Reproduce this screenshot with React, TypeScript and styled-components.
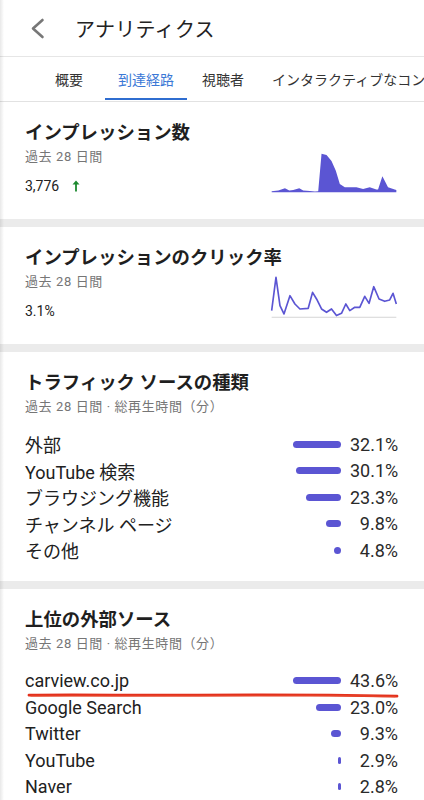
import React from 'react';
import styled, {createGlobalStyle} from 'styled-components';

const GlobalStyle = createGlobalStyle`
  html, body {
    margin: 0;
    padding: 0;
    background: #fff;
    overflow: hidden;
  }
  body {
    font-family: Roboto, "Noto Sans CJK JP", "Noto Sans", sans-serif;
    color: #212121;
  }
`;

const Page = styled.div`
  position: relative;
  width: 424px;
  background: #fff;

  &::after {
    content: '';
    position: absolute;
    left: 0;
    top: 0;
    bottom: 0;
    width: 4px;
    background: linear-gradient(to right, rgba(0, 0, 0, 0.09), rgba(0, 0, 0, 0));
    pointer-events: none;
  }
`;

const Header = styled.header`
  display: flex;
  align-items: center;
  height: 56px;
  padding-left: 28px;
  border-bottom: 1px solid #e6e6e6;
`;

const BackButton = styled.div`
  display: flex;
  width: 20px;
  height: 24px;
  margin-right: 27px;
`;

const Title = styled.h1`
  margin: 0;
  font-size: 20px;
  font-weight: 400;
  color: #222;
  letter-spacing: 0.3px;
`;

const Tabs = styled.nav`
  display: flex;
  height: 44px;
  padding-left: 33px;
  border-bottom: 1px solid #e2e2e2;
  box-shadow: 0 1px 0 #f2f2f2;
  overflow: hidden;
  white-space: nowrap;
`;

const Tab = styled.div<{ $active?: boolean }>`
  position: relative;
  display: flex;
  align-items: center;
  justify-content: center;
  flex-shrink: 0;
  min-width: 72px;
  box-sizing: border-box;
  padding: 0 13px;
  font-size: 14px;
  color: ${p => (p.$active ? '#3b78d6' : '#333')};

  &::after {
    content: '';
    position: absolute;
    left: 0;
    right: 0;
    bottom: 1px;
    height: 2px;
    background: ${p => (p.$active ? '#2f6dd0' : 'transparent')};
  }
`;

const Band = styled.div`
  height: 8px;
  background: #ebebeb;
`;

const Card = styled.section<{ $bottom?: number }>`
  padding: 18px 26px ${p => p.$bottom ?? 23}px 25px;
  background: #fff;
`;

const CardBody = styled.div`
  display: flex;
  align-items: flex-end;
`;

const CardText = styled.div`
  flex: 1;
  display: flex;
  flex-direction: column;
`;

const CardTitle = styled.h2`
  margin: 0;
  height: 26px;
  line-height: 26px;
  font-size: 18.4px;
  font-weight: 700;
  color: #1f1f1f;
  white-space: nowrap;
`;

const Sub = styled.div`
  margin-top: 2px;
  height: 18px;
  line-height: 18px;
  font-size: 13px;
  letter-spacing: 0.6px;
  color: #767676;
  white-space: nowrap;
`;

const Value = styled.div`
  display: flex;
  align-items: center;
  gap: 13px;
  margin-top: 10px;
  height: 20px;
  font-size: 14px;
  color: #222;
`;

const Chart = styled.svg`
  flex-shrink: 0;
  width: 128px;
  height: 45px;
  margin-bottom: 2px;
`;

const Rows = styled.div`
  margin-top: 15px;
`;

const Row = styled.div`
  position: relative;
  display: flex;
  align-items: center;
  height: 26.5px;
  font-size: 18px;
`;

const Label = styled.span`
  flex: 1;
  color: #212121;
  white-space: nowrap;
`;

const BarSlot = styled.div`
  display: flex;
  justify-content: flex-end;
  width: 48px;
  margin-right: 9px;
`;

const Bar = styled.div`
  height: 7px;
  border-radius: 4px;
  background: #5b55d3;
`;

const Pct = styled.span`
  width: 48px;
  text-align: right;
  color: #2a2a2a;
  white-space: nowrap;
`;

const Scribble = styled.svg`
  position: absolute;
  left: 3px;
  bottom: -5px;
  width: calc(100% - 3px);
  height: 7px;
  overflow: visible;
`;

const impressionPts = [
  [35, 160], [35, 157], [55, 155], [75, 148], [88, 155], [100, 153], [118, 148], [130, 155],
  [150, 156], [165, 158], [175, 157], [185, 44], [200, 48], [215, 66], [228, 95], [240, 135],
  [255, 145], [290, 145], [310, 150], [330, 145], [350, 152], [355, 152], [368, 112],
  [375, 125], [385, 145], [405, 152], [410, 153], [410, 160],
];

const ctrPts = [
  [35, 140], [48, 40], [60, 125], [72, 150], [90, 95], [105, 120], [120, 135], [145, 133],
  [158, 85], [170, 105], [185, 135], [200, 145], [215, 135], [230, 155], [245, 148],
  [258, 120], [270, 140], [285, 130], [300, 130], [315, 97], [328, 118], [342, 68],
  [358, 105], [375, 112], [390, 108], [400, 88], [410, 120],
];

const toPath = (pts: number[][]) => pts.map((p, i) => `${i ? 'L' : 'M'}${p[0]} ${p[1]}`).join(' ');

type Source = { label: string; pct: number };

const trafficTypes: Source[] = [
  {label: '外部', pct: 32.1},
  {label: 'YouTube 検索', pct: 30.1},
  {label: 'ブラウジング機能', pct: 23.3},
  {label: 'チャンネル ページ', pct: 9.8},
  {label: 'その他', pct: 4.8},
];

const externalSources: Source[] = [
  {label: 'carview.co.jp', pct: 43.6},
  {label: 'Google Search', pct: 23.0},
  {label: 'Twitter', pct: 9.3},
  {label: 'YouTube', pct: 2.9},
  {label: 'Naver', pct: 2.8},
];

function SourceList({items, marked}: { items: Source[]; marked?: number }) {
  const max = Math.max(...items.map(i => i.pct));
  return (
    <Rows>
      {items.map((item, i) => (
        <Row key={item.label}>
          <Label>{item.label}</Label>
          <BarSlot>
            <Bar style={{width: Math.max(3, (item.pct / max) * 48)}}/>
          </BarSlot>
          <Pct>{item.pct.toFixed(1)}%</Pct>
          {marked === i && (
            <Scribble viewBox="0 0 370 7" preserveAspectRatio="none">
              <path d="M1 3.2 C 50 2.4, 110 3.6, 170 3.1 S 290 2.6, 369 4.2"
                    stroke="#e3301c" strokeWidth="2.8" fill="none" strokeLinecap="round"/>
              <path d="M3 4 C 80 3.6, 160 4.4, 240 3.7 S 330 3.5, 367 4.8"
                    stroke="#e84a2e" strokeWidth="1.4" fill="none" strokeLinecap="round" opacity="0.7"/>
            </Scribble>
          )}
        </Row>
      ))}
    </Rows>
  );
}

function App() {
  return (
    <Page>
      <GlobalStyle/>
      <Header>
        <BackButton>
          <svg width="20" height="24" viewBox="0 0 20 24">
            <path d="M14.5 4 L5 12.5 L14.5 21" stroke="#777" strokeWidth="2.6" fill="none"
                  strokeLinecap="round" strokeLinejoin="round"/>
          </svg>
        </BackButton>
        <Title>アナリティクス</Title>
      </Header>
      <Tabs>
        <Tab>概要</Tab>
        <Tab $active>到達経路</Tab>
        <Tab>視聴者</Tab>
        <Tab>インタラクティブなコンテンツ</Tab>
      </Tabs>

      <Card>
        <CardTitle>インプレッション数</CardTitle>
        <CardBody>
          <CardText>
            <Sub>過去 28 日間</Sub>
            <Value>
              3,776
              <svg width="8" height="12" viewBox="0 0 8 12">
                <path d="M4 11.5 V2" stroke="#1c8a2f" strokeWidth="1.8"/>
                <path d="M0.5 4.6 L4 0.6 L7.5 4.6 Z" fill="#1c8a2f"/>
              </svg>
            </Value>
          </CardText>
          <Chart viewBox="30 30 385 135">
            <path d={toPath(impressionPts) + ' Z'} fill="#5b55d3"/>
          </Chart>
        </CardBody>
      </Card>
      <Band/>

      <Card>
        <CardTitle>インプレッションのクリック率</CardTitle>
        <CardBody>
          <CardText>
            <Sub>過去 28 日間</Sub>
            <Value>3.1%</Value>
          </CardText>
          <Chart viewBox="30 30 385 135">
            <path d="M35 160 H410" stroke="#d6d6d6" strokeWidth="3"/>
            <path d={toPath(ctrPts)} stroke="#5b55d3" strokeWidth="5" fill="none" strokeLinejoin="round"/>
          </Chart>
        </CardBody>
      </Card>
      <Band/>

      <Card $bottom={17}>
        <CardTitle>トラフィック ソースの種類</CardTitle>
        <Sub>過去 28 日間 · 総再生時間（分）</Sub>
        <SourceList items={trafficTypes}/>
      </Card>
      <Band/>

      <Card $bottom={30}>
        <CardTitle>上位の外部ソース</CardTitle>
        <Sub>過去 28 日間 · 総再生時間（分）</Sub>
        <SourceList items={externalSources} marked={0}/>
      </Card>
    </Page>
  );
}

export default App;
